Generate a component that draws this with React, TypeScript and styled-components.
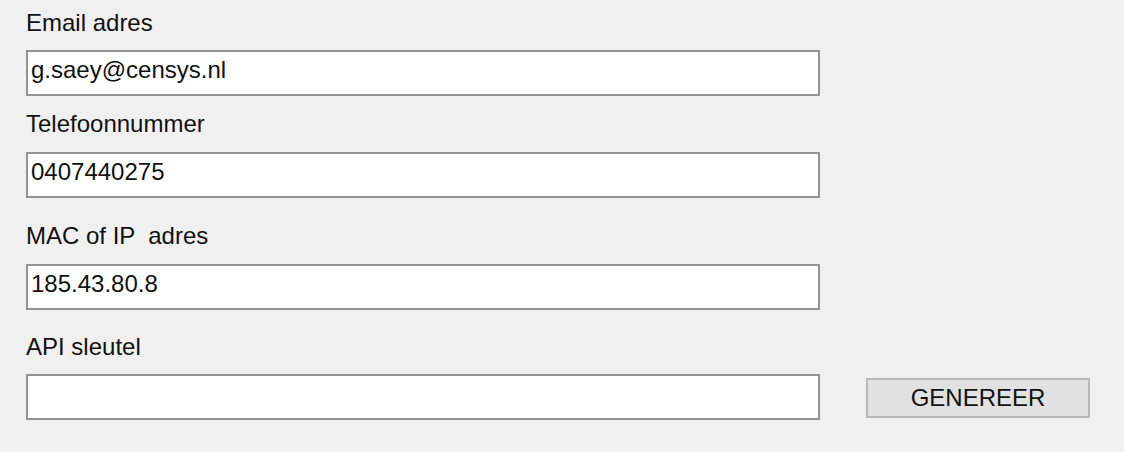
import React from "react";
import styled, { createGlobalStyle } from "styled-components";

const GlobalStyle = createGlobalStyle`
  html, body {
    margin: 0;
    padding: 0;
    background: #f0f0f0;
  }
  body {
    font-family: "Liberation Sans", Arial, sans-serif;
    width: 1124px;
    height: 452px;
    overflow: hidden;
  }
`;

const Form = styled.div`
  display: flex;
  flex-direction: column;
  padding: 9px 0 0 26px;
`;

const Field = styled.div<{ $top: number; $gap: number }>`
  display: flex;
  flex-direction: column;
  gap: ${(p) => p.$gap}px;
  margin-top: ${(p) => p.$top}px;
`;

const Label = styled.label`
  font-size: 24px;
  line-height: 28px;
  color: #111;
  white-space: pre;
`;

const Row = styled.div`
  display: flex;
  align-items: center;
  gap: 46px;
`;

const TextInput = styled.input`
  box-sizing: border-box;
  width: 794px;
  height: 46px;
  margin: 0;
  padding: 0 3px 6px;
  border: 2px solid #949494;
  border-radius: 0;
  background: #ffffff;
  font-family: "Liberation Sans", Arial, sans-serif;
  font-size: 24px;
  color: #111;
  outline: none;
`;

const Button = styled.button`
  box-sizing: border-box;
  width: 224px;
  height: 40px;
  margin: 2px 0 0;
  padding: 0;
  border: 2px solid #b9b9b9;
  border-radius: 0;
  background: #e1e1e1;
  font-family: "Liberation Sans", Arial, sans-serif;
  font-size: 24px;
  color: #111;
  cursor: pointer;
`;

const fields = [
  { label: "Email adres", value: "g.saey@censys.nl", top: 0, gap: 13 },
  { label: "Telefoonnummer", value: "0407440275", top: 14, gap: 14 },
  { label: "MAC of IP  adres", value: "185.43.80.8", top: 24, gap: 14 },
];

export default function App() {
  return (
    <>
      <GlobalStyle />
      <Form>
        {fields.map((f) => (
          <Field key={f.label} $top={f.top} $gap={f.gap}>
            <Label>{f.label}</Label>
            <TextInput readOnly value={f.value} />
          </Field>
        ))}
        <Field $top={23} $gap={13}>
          <Label>API sleutel</Label>
          <Row>
            <TextInput readOnly value="" />
            <Button type="button">GENEREER</Button>
          </Row>
        </Field>
      </Form>
    </>
  );
}
